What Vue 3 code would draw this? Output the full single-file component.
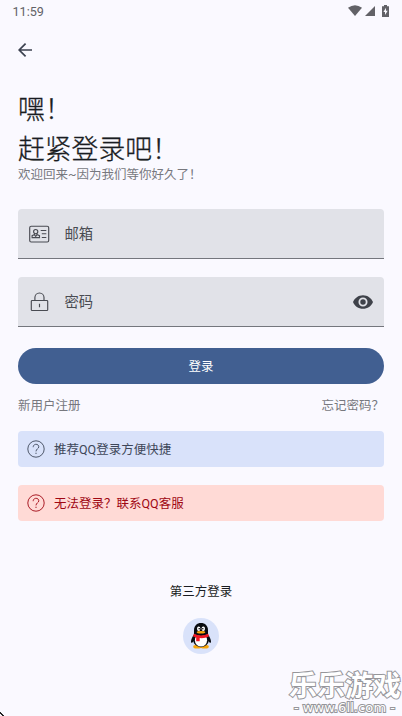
<script setup>
const notices = [
  { kind: 'info', text: '推荐QQ登录方便快捷' },
  { kind: 'error', text: '无法登录？联系QQ客服' },
]
</script>

<template>
  <main class="screen">
    <header class="status">
      <span>11:59</span>
      <div class="status-icons">
        <svg width="14" height="11" viewBox="0 0 14 11"><path d="M0 2.800Q7-2.300 14 2.800L7 11Z" /></svg>
        <svg class="signal" width="10" height="10" viewBox="0 0 10 10"><path d="M10 0V10H0Z" /></svg>
        <svg class="battery" width="7" height="12" viewBox="0 0 7 12"><path d="M2 0h3v1.200h2V12H0V1.200h2z" /><path d="M4 2.700 1.400 7H3v3l2.700-4.300H4z" fill="#faf9ff" /></svg>
      </div>
    </header>
    <nav class="nav">
      <svg width="14" height="14" viewBox="0 0 14 14" fill="none" stroke="#3c4250" stroke-width="1.7"><path d="M14 7H1.500M7.600.6 1.200 7l6.400 6.400" /></svg>
    </nav>
    <h1>嘿！<br>赶紧登录吧！</h1>
    <p class="subtitle">欢迎回来~因为我们等你好久了！</p>

    <div class="field">
      <svg class="lead" width="22" height="20" viewBox="0 0 22 20" fill="none" stroke="#494b52" stroke-width="1.150">
        <rect x="1.700" y="2.200" width="19" height="15.800" rx="1.500" />
        <circle cx="7.700" cy="7.600" r="2.100" />
        <path d="M6.600 9.300v1.200l-2.500 1.200v1.900h7.400v-1.900L8.900 10.500V9.300M6.300 10.700l1.400 1.700 1.400-1.700M12.700 6.500h5.600M13.800 9.700h4.500M13.800 13.500h4.500" />
      </svg>
      <span class="label">邮箱</span>
    </div>
    <div class="field">
      <svg class="lead" width="22" height="20" viewBox="0 0 22 20" fill="none" stroke="#494b52" stroke-width="1.150">
        <rect x="3.300" y="8.500" width="16.400" height="10" rx=".8" />
        <path d="M6.900 8.500V5.500a4.550 4.550 0 0 1 9.100 0v3M11.500 11.700v3.500" />
      </svg>
      <span class="label">密码</span>
      <svg class="eye" width="20" height="14" viewBox="0 0 22 15"><path fill="#3f424a" fill-rule="evenodd" d="M11 0C6 0 1.730 3.110 0 7.500 1.730 11.890 6 15 11 15s9.270-3.110 11-7.500C20.270 3.110 16 0 11 0Zm0 12.500a5 5 0 1 1 0-10 5 5 0 0 1 0 10Zm0-8a3 3 0 1 0 0 6 3 3 0 0 0 0-6Z" /></svg>
    </div>

    <button class="login">登录</button>
    <div class="links"><span>新用户注册</span><span>忘记密码？</span></div>

    <div v-for="n in notices" :key="n.kind" class="notice" :class="n.kind">
      <svg width="18" height="18" viewBox="0 0 18 18" fill="none" stroke="currentColor" stroke-width=".9">
        <circle cx="9" cy="9" r="8.200" />
        <path d="M6.200 7.200C6.200 3.300 11.800 3.500 11.800 6.800C11.800 8.800 9 8.900 9 11.400M9 12.700v1.300" />
      </svg>
      <span class="notice-text">{{ n.text }}</span>
    </div>

    <section class="third">
      <span>第三方登录</span>
      <div class="qq">
        <svg width="20" height="26" viewBox="0 0 20 26">
          <ellipse cx="6.300" cy="23.700" rx="4.100" ry="1.900" fill="#f9a60a" />
          <ellipse cx="13.700" cy="23.700" rx="4.100" ry="1.900" fill="#f9a60a" />
          <path d="M3.100 11.500C1.200 14 0 16.500 0 18.500c0 2 1 1.600 2.500-.3l15 0c1.500 1.900 2.500 2.300 2.500.3 0-2-1.200-4.500-3.100-7Z" fill="#080b10" />
          <ellipse cx="10" cy="17" rx="7.800" ry="7.200" fill="#080b10" />
          <ellipse cx="10" cy="17.200" rx="6.100" ry="6.300" fill="#fff" />
          <path d="M3 11V7.200C3 2.700 6 0 10 0s7 2.700 7 7.200V11Q10 15 3 11Z" fill="#080b10" />
          <ellipse cx="7.700" cy="5.700" rx="1.700" ry="2.300" fill="#fff" />
          <ellipse cx="12.300" cy="5.700" rx="1.700" ry="2.300" fill="#fff" />
          <circle cx="8.200" cy="5.800" r=".8" /><circle cx="11.800" cy="5.800" r=".8" />
          <ellipse cx="10" cy="9.300" rx="4.300" ry="1.300" fill="#f9a60a" />
          <path d="M2.800 10.800Q10 14.200 17.200 10.800l.7 2.700Q13 15.800 8.700 15.100V18.200H5.200V14.600L2.100 13.400Z" fill="#ee1722" />
        </svg>
      </div>
    </section>

    <aside class="watermark">
      <div class="mark">乐乐游戏</div>
      <div class="site"><span>-</span><span>www.6ll.com</span><span>-</span></div>
    </aside>
    <svg class="corner" width="4" height="4" viewBox="0 0 4 4"><path d="M0 0h1v1h1v1h1v1h1v1H2V3H1V2H0Z" fill="#222" /></svg>
  </main>
</template>

<style>
body { margin: 0; background: #faf9ff; }
</style>

<style scoped>
.screen {
  position: relative;
  box-sizing: border-box;
  width: 402px;
  height: 716px;
  padding: 0 18px;
  overflow: hidden;
  background: #faf9ff;
  color: #191c22;
  font-family: Roboto, "Noto Sans CJK SC", sans-serif;
  font-size: 12.5px;
}
svg { display: block; flex: none; }
.status {
  display: flex;
  justify-content: space-between;
  align-items: center;
  height: 22px;
  margin: 0 -6px 0 -5.5px;
  color: #626267;
  fill: #626267;
  font-size: 12.6px;
}
.status-icons { display: flex; align-items: center; height: 20px; margin: 0 1px 1px 0; }
.signal { margin-left: 3px; }
.battery { margin-left: 7px; }
.nav { display: flex; align-items: center; height: 56px; }
h1 {
  margin: 12px 0 0;
  font-size: 26.8px;
  line-height: 40px;
  font-weight: 300;
  -webkit-text-stroke: 0.3px currentColor;
}
.subtitle { margin: -4px 0 0; line-height: 18px; color: #77787e; }
.field {
  display: flex;
  align-items: center;
  box-sizing: border-box;
  height: 50px;
  margin-top: 18px;
  padding: 0 11px 0 10px;
  border-bottom: 1px solid #74767d;
  border-radius: 4px 4px 0 0;
  background: #e1e2e8;
}
.subtitle + .field { margin-top: 25px; }
.label { margin-left: 14.5px; font-size: 14.3px; line-height: 20px; color: #494b52; }
.eye { margin-left: auto; }
.login {
  display: block;
  width: 100%;
  height: 36px;
  margin: 21px 0 0;
  padding: 0 0 2px;
  border: 0;
  border-radius: 18px;
  background: #415f91;
  color: #fff;
  font: inherit;
}
.links {
  display: flex;
  justify-content: space-between;
  margin: 13px 0 16px;
  line-height: 18px;
  color: #77787e;
}
.notice {
  display: flex;
  align-items: center;
  gap: 9px;
  height: 36px;
  margin-bottom: 18px;
  padding-left: 9px;
  border-radius: 4px;
}
.notice-text { padding-bottom: 2px; }
.info { background: #d9e2fa; color: #3e4759; }
.error { background: #ffdad6; color: #a00713; }
.third {
  display: flex;
  flex-direction: column;
  align-items: center;
  margin-top: 62px;
  line-height: 18px;
}
.qq {
  display: flex;
  align-items: center;
  justify-content: center;
  width: 36px;
  height: 36px;
  margin-top: 17px;
  border-radius: 50%;
  background: #d9e2fa;
}
.watermark {
  position: absolute;
  right: 0;
  bottom: 1px;
  width: 113px;
  color: #fff;
  -webkit-text-stroke: 2px #96969b;
  paint-order: stroke fill;
}
.mark { font: 700 28px/31px "Noto Sans CJK SC", sans-serif; white-space: nowrap; }
.site {
  display: flex;
  justify-content: space-between;
  padding: 0 7px 0 5px;
  font: 400 13px/15px "DejaVu Sans", sans-serif;
  letter-spacing: 0.1px;
  -webkit-text-stroke-width: 2px;
}
.corner { position: absolute; left: 0; bottom: 0; }
</style>
